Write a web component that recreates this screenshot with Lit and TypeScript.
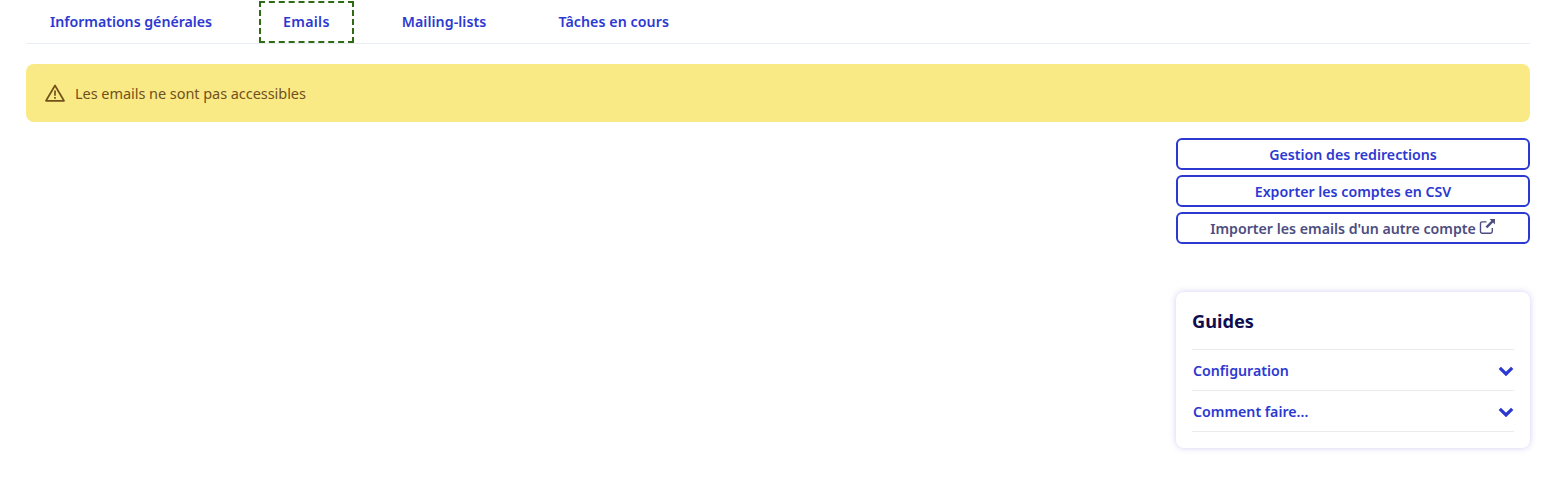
import { LitElement, html, css } from "lit";
import { customElement } from "lit/decorators.js";

const chevron = html`<svg class="chev" viewBox="0 0 16 10" width="16" height="10" aria-hidden="true"><path d="M1.8 1.8 8 8l6.2-6.2" fill="none" stroke="currentColor" stroke-width="3.2"/></svg>`;

@customElement("app-root")
export class AppRoot extends LitElement {
  static styles = css`
    :host { display: block; font-family: "Noto Sans", "Liberation Sans", sans-serif; font-size: 14.2px; color: #4d4d80; background: #fff; height: 497px; }
    .page { padding: 0 24px 0 26px; }
    .tabs { display: flex; gap: 24px; height: 44px; box-sizing: border-box; border-bottom: 1px solid #e8eef4; padding-top: 1px; }
    .tab { padding: 0 24px 2px; display: flex; align-items: center; font-weight: 600; color: #2c39d1; height: 42px; box-sizing: border-box; letter-spacing: 0.07px; }
    .tab.first { margin-right: -1px; letter-spacing: -0.03px; }
    .tab.active { outline: 2px dashed #2e6b12; outline-offset: -2px; letter-spacing: 0.3px; }
    .alert { margin-top: 20px; height: 58px; border-radius: 8px; background: #f9ea86; color: #72501a; display: flex; align-items: center; gap: 10px; padding-left: 19px; font-size: 14.5px; letter-spacing: -0.05px; }
    .side { margin: 16px 0 0 auto; width: 354px; }
    .btns { display: flex; flex-direction: column; gap: 5px; }
    .btn { height: 32px; box-sizing: border-box; border: 2px solid #2c39d1; border-radius: 6px; display: flex; align-items: center; justify-content: center; gap: 3px; font-weight: 600; color: #2c39d1; }
    .btn.muted { color: #4d4d80; }
    .btn svg { margin-bottom: 3px; }
    .card { margin-top: 48px; height: 156px; box-sizing: border-box; background: #fff; border-radius: 8px; box-shadow: 0 0 6px rgba(70, 60, 210, .25); padding: 0 16px; }
    h2 { margin: 0; height: 57px; box-sizing: border-box; padding: 16px 0 0 0; font-size: 18.2px; line-height: 27px; font-weight: 700; color: #0e0e50; }
    .row { height: 41px; box-sizing: border-box; border-top: 1px solid #ebebf0; display: flex; align-items: center; justify-content: space-between; padding-left: 1px; font-weight: 600; color: #2c39d1; }
    .row.last { height: 42px; border-bottom: 1px solid #ebebf0; }
    .chev { display: block; margin-top: 1px; }
  `;

  render() {
    return html`<div class="page">
      <nav class="tabs">
        <div class="tab first">Informations générales</div>
        <div class="tab active">Emails</div>
        <div class="tab">Mailing-lists</div>
        <div class="tab">Tâches en cours</div>
      </nav>
      <div class="alert">
        <svg viewBox="0 0 20 18" width="20" height="18" aria-hidden="true"><path d="M10 1.5 1 16.8h18Z" fill="none" stroke="currentColor" stroke-width="1.7" stroke-linejoin="round"/><path d="M10 6.5v5.3M10 13v1.8" stroke="currentColor" stroke-width="1.7"/></svg>
        <span>Les emails ne sont pas accessibles</span>
      </div>
      <aside class="side">
        <div class="btns">
          <div class="btn">Gestion des redirections</div>
          <div class="btn">Exporter les comptes en CSV</div>
          <div class="btn muted">Importer les emails d'un autre compte
            <svg viewBox="0 0 16 16" width="17" height="17" aria-hidden="true"><path d="M12.5 9.5v3.2a1.6 1.6 0 0 1-1.6 1.6H3a1.6 1.6 0 0 1-1.6-1.6V5.2A1.6 1.6 0 0 1 3 3.6h4" fill="none" stroke="currentColor" stroke-width="1.3"/><path d="M10 1h5v5l-1.8-1.8-5.4 5.4-1.6-1.6 5.4-5.4Z" fill="currentColor"/></svg>
          </div>
        </div>
        <section class="card">
          <h2>Guides</h2>
          <div class="row"><span>Configuration</span>${chevron}</div>
          <div class="row last"><span>Comment faire...</span>${chevron}</div>
        </section>
      </aside>
    </div>`;
  }
}
